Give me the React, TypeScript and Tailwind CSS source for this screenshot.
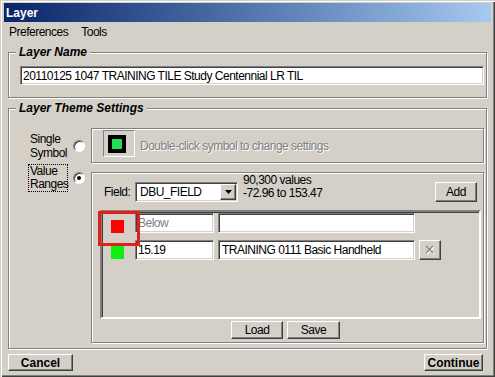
import { ReactNode } from 'react';

const sunken =
  'border border-t-[#808080] border-l-[#808080] border-b-white border-r-white shadow-[inset_1px_1px_0_#404040,inset_-1px_-1px_0_#d4d0c8]';
const raised =
  'border border-t-white border-l-white border-b-[#404040] border-r-[#404040] shadow-[inset_-1px_-1px_0_#808080]';
const etched = 'border border-[#808080] shadow-[inset_1px_1px_0_#fff,1px_1px_0_#fff]';

function Group({ label, className, children }: { label: string; className: string; children: ReactNode }) {
  return (
    <div className={`relative ${etched} ${className}`}>
      <span className="absolute -top-[8px] left-[7px] bg-[#d4d0c8] px-[3px] text-[12px] leading-[14px] tracking-normal font-bold italic text-black">
        {label}
      </span>
      {children}
    </div>
  );
}

function Radio({ checked }: { checked?: boolean }) {
  return (
    <div className="w-[12px] h-[12px] shrink-0 rounded-full bg-white border border-t-[#808080] border-l-[#808080] border-b-white border-r-white shadow-[inset_1px_1px_0_#404040] flex items-center justify-center">
      {checked && <div className="w-[4px] h-[4px] rounded-full bg-black" />}
    </div>
  );
}

function Button({ children, className }: { children: ReactNode; className: string }) {
  return <div className={`${raised} bg-[#d4d0c8] flex items-center justify-center leading-none ${className}`}>{children}</div>;
}

export default function App() {
  return (
    <div className="w-[495px] h-[377px] bg-[#d4d0c8] flex flex-col px-[4px] pt-[3px] text-black text-[12px] tracking-[-0.5px] font-['Liberation_Sans',Arial,sans-serif] shadow-[inset_1px_1px_0_#d4d0c8,inset_2px_2px_0_#fff,inset_-1px_-1px_0_#404040,inset_-2px_-2px_0_#808080] overflow-hidden">
      {/* title bar */}
      <div className="h-[19px] bg-linear-to-r from-[#0a246a] to-[#a6caf0] flex items-center pl-[2px] text-white font-bold tracking-normal">
        Layer
      </div>

      {/* menu */}
      <div className="h-[20px] flex items-center pl-[5px] leading-none">
        <span>Preferences</span>
        <span className="ml-[13px]">Tools</span>
      </div>

      <Group label="Layer Name" className="mt-[10px] mx-[4px] h-[46px] pt-[13px] pl-[11px] pr-[2px]">
        <div className={`${sunken} bg-white h-[19px] flex items-center pl-[2px] leading-none`}>
          20110125 1047 TRAINING TILE Study Centennial LR TIL
        </div>
      </Group>

      <Group label="Layer Theme Settings" className="mt-[10px] mx-[4px] h-[241px] pt-[19px] pl-[21px] pr-[2px]">
        {/* single symbol */}
        <div className="flex items-center h-[35px]">
          <div className="w-[43px] leading-[14px]">
            Single
            <br />
            Symbol
          </div>
          <Radio />
          <div className={`${etched} ml-[6px] flex-1 h-[35px] flex items-start pl-[11px] pt-[1px]`}>
            <div className="w-[32px] h-[27px] border border-t-[#808080] border-l-[#808080] border-b-white border-r-white pl-[4px] pt-[4px]">
              <div className="w-[18px] h-[18px] bg-black flex items-center justify-center">
                <div className="w-[10px] h-[10px] bg-[#22dd55]" />
              </div>
            </div>
            <span className="ml-[5px] self-center text-[#808080] [text-shadow:1px_1px_0_#fff]">
              Double-click symbol to change settings
            </span>
          </div>
        </div>

        {/* value ranges */}
        <div className="flex items-start mt-[9px]">
          <div className="w-[43px] -mt-[8px]">
            <div className="border border-dotted border-black -ml-[2px] pl-[1px] w-[40px] leading-[13px]">
              Value
              <br />
              Ranges
            </div>
          </div>
          <Radio checked />
          <div className={`${etched} ml-[6px] flex-1 h-[171px] flex flex-col pt-[9px]`}>
            <div className="flex items-start pl-[12px] pr-[6px]">
              <span className="w-[31px] h-[20px] flex items-center">Field:</span>
              <div className={`${sunken} bg-white w-[103px] h-[20px] flex items-center pl-[4px] pr-[1px] leading-none`}>
                <span className="flex-1">DBU_FIELD</span>
                <div className={`${raised} w-[16px] h-[16px] bg-[#d4d0c8] flex items-center justify-center`}>
                  <svg width="7" height="4" viewBox="0 0 7 4">
                    <path d="M0 0h7L3.5 4z" fill="#000" />
                  </svg>
                </div>
              </div>
              <div className="ml-[5px] -mt-[8px] leading-[13px]">
                90,300 values
                <br />
                -72.96 to 153.47
              </div>
              <Button className="ml-auto w-[42px] h-[20px]">Add</Button>
            </div>

            {/* range table */}
            <div className="relative ml-[8px] mt-[8px] w-[381px] h-[109px] border-2 border-t-[#808080] border-l-[#808080] border-b-white border-r-white shadow-[inset_1px_1px_0_#404040] pl-[9px] pt-[1px] flex flex-col gap-[7px]">
              <div className="flex items-start h-[20px]">
                <div className="w-[13px] h-[13px] mt-[7px] bg-[#ff0000]" />
                <div className={`${sunken} ml-[11px] bg-white w-[79px] h-[20px] flex items-center pl-[2px] leading-none text-[#808080]`}>
                  Below
                </div>
                <div className={`${sunken} ml-[4px] bg-white w-[197px] h-[20px]`} />
              </div>
              <div className="flex items-start h-[20px]">
                <div className="w-[13px] h-[13px] mt-[6px] bg-[#11ee11]" />
                <div className={`${sunken} ml-[11px] bg-white w-[79px] h-[20px] flex items-center pl-[2px] leading-none`}>
                  15.19
                </div>
                <div className={`${sunken} ml-[4px] bg-white w-[197px] h-[20px] flex items-center pl-[3px] leading-none`}>
                  TRAINING 0111 Basic Handheld
                </div>
                <Button className="ml-[4px] w-[22px] h-[20px]">
                  <svg width="10" height="10" viewBox="0 0 10 10">
                    <path d="M2 2l7 7M9 2l-7 7" stroke="#fff" strokeWidth="1.2" />
                    <path d="M1 1l7 7M8 1l-7 7" stroke="#808080" strokeWidth="1.2" />
                  </svg>
                </Button>
              </div>
              <div className="absolute left-[-4px] top-[-1px] w-[42px] h-[35px] border-[3px] border-[#e0201a]" />
            </div>

            <div className="flex justify-center gap-[4px] mt-[2px] pr-[4px]">
              <Button className="w-[52px] h-[18px]">Load</Button>
              <Button className="w-[53px] h-[18px]">Save</Button>
            </div>
          </div>
        </div>
      </Group>

      {/* bottom buttons */}
      <div className="flex justify-between mt-[5px] pl-[4px] pr-[8px] font-bold tracking-normal">
        <Button className="w-[65px] h-[17px]">Cancel</Button>
        <Button className="w-[59px] h-[17px]">Continue</Button>
      </div>
    </div>
  );
}
